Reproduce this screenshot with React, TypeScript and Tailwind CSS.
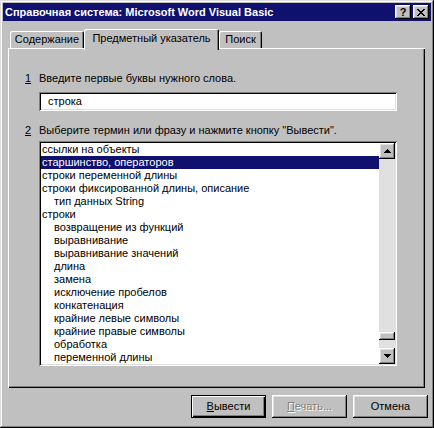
import React from "react";

const raised =
  "shadow-[inset_-1px_-1px_#000,inset_1px_1px_#fff,inset_-2px_-2px_#808080,inset_2px_2px_#dfdfdf]";
const sunken =
  "shadow-[inset_1px_1px_#808080,inset_-1px_-1px_#fff,inset_2px_2px_#000,inset_-2px_-2px_#dfdfdf]";

const items: { text: string; indent?: boolean }[] = [
  { text: "ссылки на объекты" },
  { text: "старшинство, операторов" },
  { text: "строки переменной длины" },
  { text: "строки фиксированной длины, описание" },
  { text: "тип данных String", indent: true },
  { text: "строки" },
  { text: "возвращение из функций", indent: true },
  { text: "выравнивание", indent: true },
  { text: "выравнивание значений", indent: true },
  { text: "длина", indent: true },
  { text: "замена", indent: true },
  { text: "исключение пробелов", indent: true },
  { text: "конкатенация", indent: true },
  { text: "крайние левые символы", indent: true },
  { text: "крайние правые символы", indent: true },
  { text: "обработка", indent: true },
  { text: "переменной длины", indent: true },
];

function Arrow({ down }: { down?: boolean }) {
  return (
    <svg width="7" height="4" viewBox="0 0 7 4" shapeRendering="crispEdges">
      {down ? (
        <path d="M0 0h7v1H0zM1 1h5v1H1zM2 2h3v1H2zM3 3h1v1H3z" fill="#000" />
      ) : (
        <path d="M3 0h1v1H3zM2 1h3v1H2zM1 2h5v1H1zM0 3h7v1H0z" fill="#000" />
      )}
    </svg>
  );
}

function CloseGlyph() {
  return (
    <svg width="8" height="7" viewBox="0 0 8 7" shapeRendering="crispEdges">
      <path
        d="M0 0h2v1H0zM6 0h2v1H6zM1 1h2v1H1zM5 1h2v1H5zM2 2h4v1H2zM3 3h2v1H3zM2 4h4v1H2zM1 5h2v1H1zM5 5h2v1H5zM0 6h2v1H0zM6 6h2v1H6z"
        fill="#000"
      />
    </svg>
  );
}

export default function App() {
  return (
    <div
      className="flex h-[428px] w-[434px] flex-col bg-[#c0c0c0] p-[3px] text-[11px] leading-[13px] text-black shadow-[inset_-1px_-1px_#000,inset_1px_1px_#dfdfdf,inset_-2px_-2px_#808080,inset_2px_2px_#fff]"
      style={{ fontFamily: '"Liberation Sans", Arial, sans-serif' }}
    >
      {/* title bar */}
      <div className="flex h-[18px] items-center justify-between bg-[#10106e] pr-[2px] pl-[2px]">
        <span className="font-bold text-white">
          Справочная система: Microsoft Word Visual Basic
        </span>
        <div className="flex gap-[2px]">
          <div className={`flex h-[14px] w-[16px] items-center justify-center bg-[#c0c0c0] text-[11px] font-bold ${raised}`}>
            ?
          </div>
          <div className={`flex h-[14px] w-[16px] items-center justify-center bg-[#c0c0c0] ${raised}`}>
            <CloseGlyph />
          </div>
        </div>
      </div>

      {/* tabs */}
      <div className="relative z-10 mt-[8px] ml-[7px] flex h-[19px] items-end">
        <div className="flex h-[17px] w-[74px] items-center justify-center rounded-t-[2px] shadow-[inset_1px_1px_#fff,inset_-1px_0_#000,inset_-2px_0_#808080]">
          Содержание
        </div>
        <div className="-mb-[2px] flex h-[21px] w-[135px] items-start justify-center rounded-t-[2px] bg-[#c0c0c0] pt-[3px] shadow-[inset_1px_1px_#fff,inset_-1px_0_#000,inset_-2px_0_#808080]">
          Предметный указатель
        </div>
        <div className="flex h-[17px] w-[43px] items-center justify-center rounded-t-[2px] shadow-[inset_1px_1px_#fff,inset_-1px_0_#000,inset_-2px_0_#808080]">
          Поиск
        </div>
      </div>

      {/* panel */}
      <div className="ml-[5px] flex h-[340px] w-[417px] flex-col pt-[24px] pl-[17px] shadow-[inset_1px_1px_#fff,inset_-1px_-1px_#000,inset_-2px_-2px_#808080]">
        <div className="flex h-[13px]">
          <span className="w-[14px] underline">1</span>
          <span>Введите первые буквы нужного слова.</span>
        </div>
        <div className={`mt-[7px] ml-[14px] flex h-[19px] w-[358px] items-center bg-white pl-[9px] ${sunken}`}>
          строка
        </div>
        <div className="mt-[13px] flex h-[13px]">
          <span className="w-[14px] underline">2</span>
          <span>Выберите термин или фразу и нажмите кнопку "Вывести".</span>
        </div>
        <div className={`mt-[4px] ml-[14px] flex h-[225px] w-[358px] bg-white p-[2px] ${sunken}`}>
          <ul className="flex-1">
            {items.map((it, i) => (
              <li
                key={i}
                className={`h-[13px] whitespace-nowrap ${it.indent ? "pl-[13px]" : "pl-[1px]"} ${
                  i === 1 ? "bg-[#10106e] text-white" : ""
                }`}
              >
                {it.text}
              </li>
            ))}
          </ul>
          <div className="flex w-[16px] flex-col bg-[#e0e0e0]">
            <div className={`flex h-[16px] items-center justify-center bg-[#c0c0c0] ${raised}`}>
              <Arrow />
            </div>
            <div className="flex flex-1 flex-col justify-end pb-[8px]">
              <div className={`h-[8px] bg-[#c0c0c0] ${raised}`} />
            </div>
            <div className={`flex h-[16px] items-center justify-center bg-[#c0c0c0] ${raised}`}>
              <Arrow down />
            </div>
          </div>
        </div>
      </div>

      {/* buttons */}
      <div className="mt-[7px] mr-[3px] flex justify-end gap-[6px]">
        <button
          type="button"
          className="flex h-[23px] w-[75px] items-center justify-center bg-[#c0c0c0] shadow-[inset_0_0_0_1px_#000,inset_2px_2px_#fff,inset_-2px_-2px_#000,inset_-3px_-3px_#808080]"
        >
          <span>
            <span className="underline">В</span>ывести
          </span>
        </button>
        <button
          type="button"
          className={`flex h-[23px] w-[75px] items-center justify-center bg-[#c0c0c0] text-[#808080] [text-shadow:1px_1px_0_#fff] ${raised}`}
        >
          <span>
            <span className="underline">П</span>ечать...
          </span>
        </button>
        <button
          type="button"
          className={`flex h-[23px] w-[75px] items-center justify-center bg-[#c0c0c0] ${raised}`}
        >
          Отмена
        </button>
      </div>
    </div>
  );
}
